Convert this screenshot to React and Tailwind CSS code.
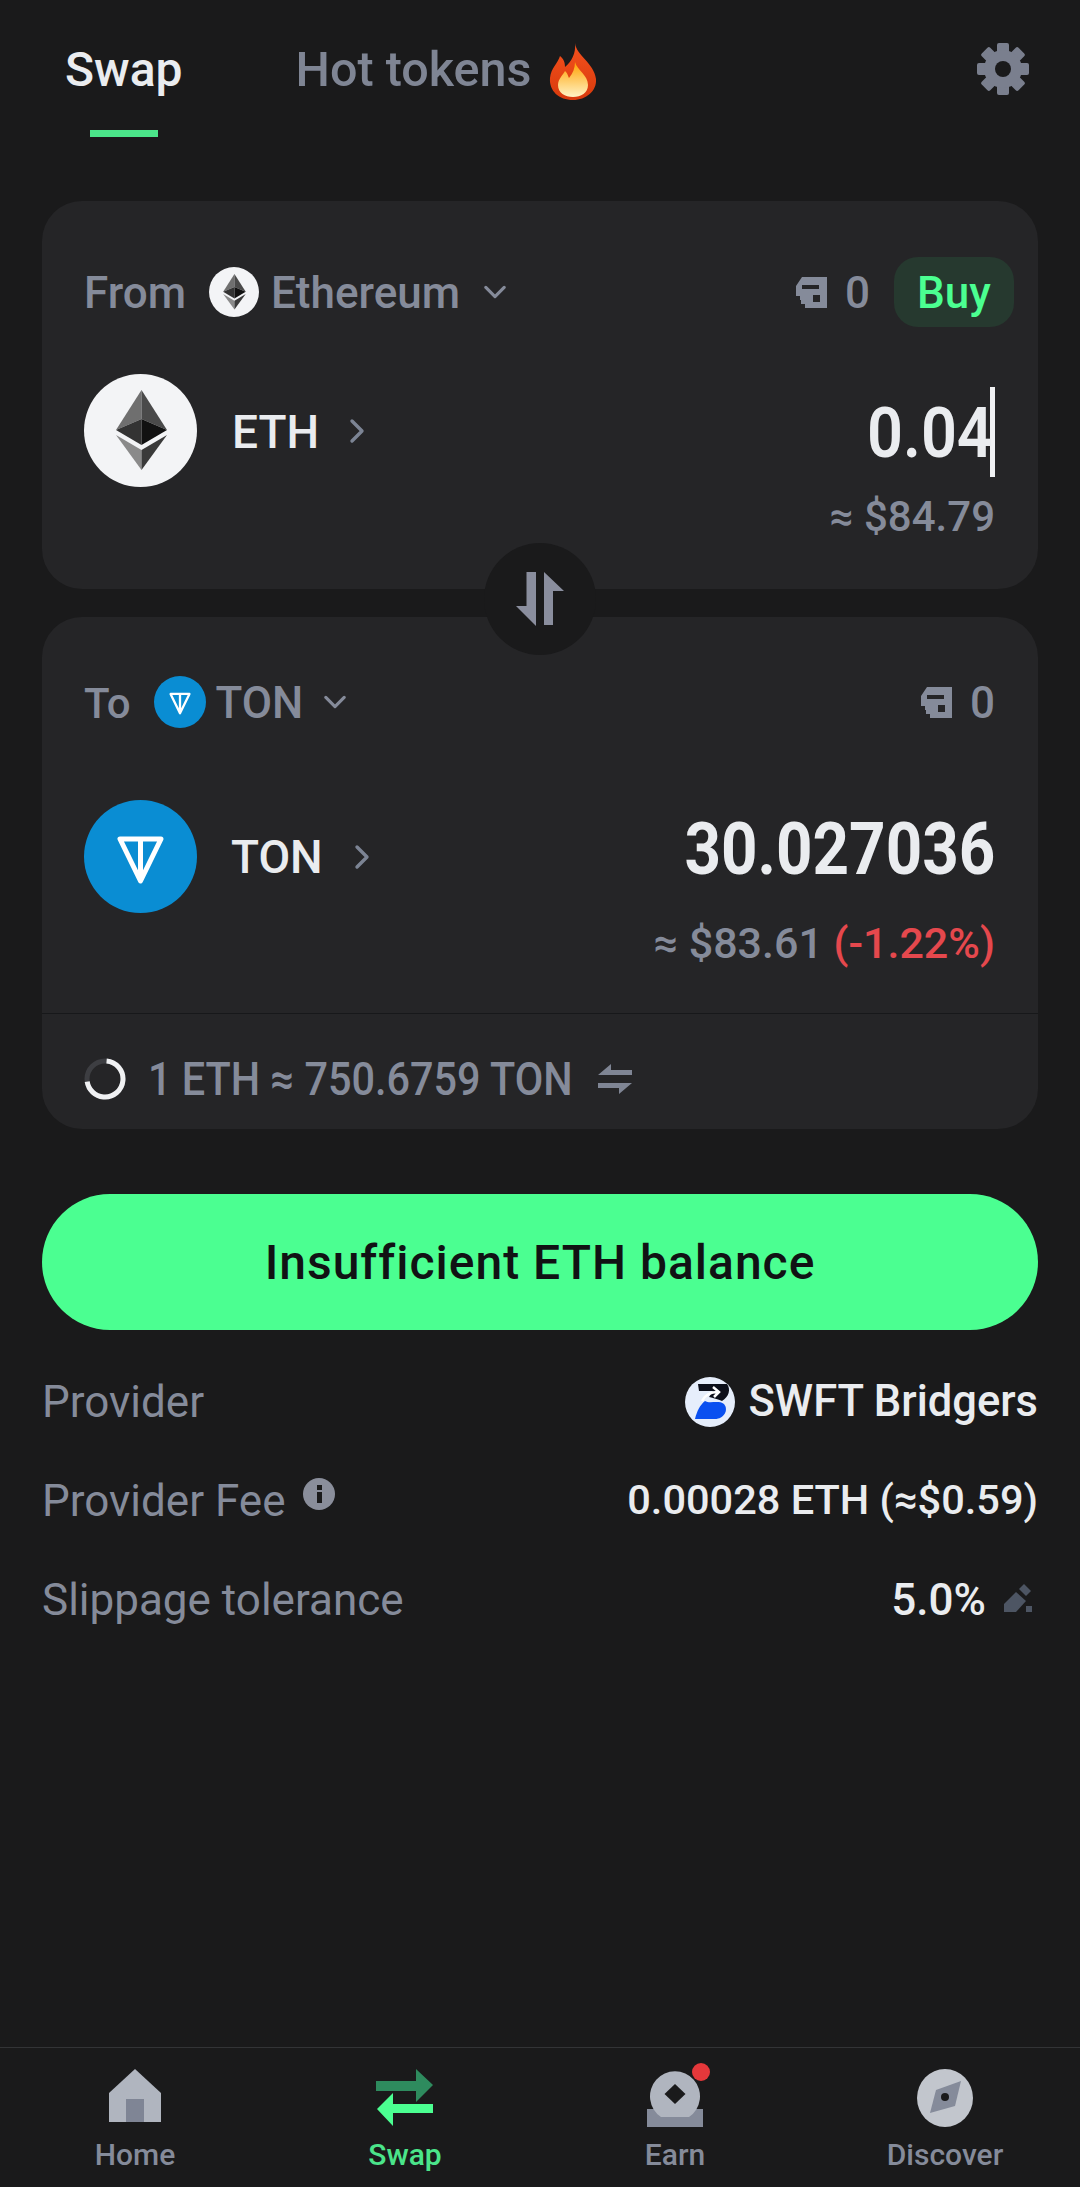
const font = { fontFamily: 'Roboto, sans-serif' };

const Chevron = ({ dir = 'right', className = '' }) => (
  <svg viewBox="0 0 24 24" className={className} fill="none" stroke="currentColor" strokeWidth="3.4" strokeLinecap="round" strokeLinejoin="round">
    {dir === 'right' ? <polyline points="7,2 17,12 7,22" /> : <polyline points="2,7 12,17 22,7" />}
  </svg>
);

const EthIcon = ({ size }) => (
  <svg viewBox="0 0 113 113" width={size} height={size} className="shrink-0">
    <circle cx="56.5" cy="56.5" r="56.5" fill="#f3f4f6" />
    <polygon points="57.5,16 32,56 57.5,45" fill="#6f6f6f" />
    <polygon points="57.5,16 83,56 57.5,45" fill="#4a4a4a" />
    <polygon points="32,56 57.5,45 57.5,71" fill="#333333" />
    <polygon points="83,56 57.5,45 57.5,71" fill="#111111" />
    <polygon points="32,61 57.5,76 57.5,96" fill="#8a8a8a" />
    <polygon points="83,61 57.5,76 57.5,96" fill="#3a3a3a" />
  </svg>
);

const TonIcon = ({ size }) => (
  <svg viewBox="0 0 113 113" width={size} height={size} className="shrink-0">
    <circle cx="56.5" cy="56.5" r="56.5" fill="#0a8dd3" />
    <path d="M36 39 H77 L56.5 81 Z M56.5 39 V81" fill="none" stroke="#ffffff" strokeWidth="5" strokeLinejoin="round" />
  </svg>
);

const Wallet = () => (
  <svg viewBox="0 0 31 31" className="w-[31px] h-[31px]" fill="#858b9a">
    <path d="M6 0 H31 V31 H9 V27 H5 V23 H0 V9 Z" />
    <rect x="6" y="8" width="17" height="4" fill="#252527" />
    <rect x="17" y="18" width="7" height="7" fill="#252527" />
    <rect x="0" y="19" width="4" height="4" fill="#252527" />
  </svg>
);

const Flame = () => (
  <svg viewBox="0 0 50 57" className="w-[50px] h-[57px]">
    <defs>
      <linearGradient id="flameOuter" x1="0" y1="0" x2="0" y2="1">
        <stop offset="0" stopColor="#f4511e" />
        <stop offset="1" stopColor="#d83a0c" />
      </linearGradient>
      <linearGradient id="flameInner" x1="0" y1="0" x2="0" y2="1">
        <stop offset="0" stopColor="#ffa000" />
        <stop offset="1" stopColor="#fff3c4" />
      </linearGradient>
    </defs>
    <path d="M27 0 C28 12 46 20 48 36 C49 48 38 57 25 57 C11 57 1 48 2 35 C3 25 10 20 12 13 C16 16 17 20 17 24 C24 18 28 10 27 0 Z" fill="url(#flameOuter)" />
    <path d="M27 19 C29 27 40 32 40 42 C40 50 33 54 25 54 C17 54 10 50 10 42 C10 36 15 32 17 28 C20 31 20 33 21 35 C25 30 27 25 27 19 Z" fill="url(#flameInner)" />
  </svg>
);

const Gear = () => (
  <svg viewBox="0 0 52 52" className="w-[52px] h-[52px]" fill="#7a7f8e">
    {[0, 45, 90, 135].map((a) => (
      <rect key={a} x="20" y="0" width="12" height="52" rx="2" transform={`rotate(${a} 26 26)`} />
    ))}
    <path fillRule="evenodd" d="M26 7 A19 19 0 1 1 26 45 A19 19 0 1 1 26 7 Z M26 18 A8 8 0 1 0 26 34 A8 8 0 1 0 26 18 Z" />
    <circle cx="26" cy="26" r="8" fill="#1a1a1b" />
  </svg>
);

const Spinner = () => (
  <svg viewBox="0 0 42 42" className="w-[42px] h-[42px] shrink-0" fill="none" strokeWidth="5">
    <circle cx="21" cy="21" r="18" stroke="#3d3e42" />
    <circle cx="21" cy="21" r="18" stroke="#f0f1f3" strokeDasharray="80 113" transform="rotate(-85 21 21)" />
  </svg>
);

const HomeIcon = () => (
  <svg viewBox="0 0 52 53" className="w-[52px] h-[53px]">
    <polygon points="26,0 52,24 52,53 0,53 0,24" fill="#b0b5bf" />
    <rect x="17" y="30" width="18" height="23" fill="#7f8595" />
  </svg>
);

const SwapIcon = () => (
  <svg viewBox="0 0 58 58" className="w-[58px] h-[58px]">
    <polygon points="0,12 40,12 40,0 57,16 40,33 40,22 0,22" fill="#2e8b5e" />
    <polygon points="1,40 17,24 17,35 57,35 57,44 17,44 17,57" fill="#4bff91" />
  </svg>
);

const EarnIcon = () => (
  <svg viewBox="0 0 58 58" className="w-[58px] h-[58px]">
    <rect x="1" y="40" width="56" height="18" fill="#858b9a" />
    <path d="M15 48 A25 25 0 1 1 43 48 Z" fill="#b0b5bf" />
    <polygon points="29,15 39.5,25 29,35 18.500,25" fill="#1a1a1b" />
  </svg>
);

const DiscoverIcon = () => (
  <svg viewBox="0 0 56 58" className="w-[56px] h-[58px]">
    <ellipse cx="28" cy="29" rx="28" ry="29" fill="#c2c6cd" />
    <polygon points="44,12 38,37 13,44 19,21" fill="#858b9a" />
    <circle cx="28" cy="28" r="4" fill="#1a1a1b" />
  </svg>
);

const NavItem = ({ icon, label, active, dot }) => (
  <div className="flex-1 flex flex-col items-center">
    <div className="relative h-[58px] flex items-start justify-center">
      {icon}
      {dot && <span className="absolute -top-[6px] -right-[6px] w-[18px] h-[18px] rounded-full bg-[#e5383b]" />}
    </div>
    <span className={`mt-[8px] text-[30px] leading-[40px] font-medium ${active ? 'text-[#4be58a]' : 'text-[#858b9a]'}`}>{label}</span>
  </div>
);

const DetailRow = ({ left, right }) => (
  <div className="flex justify-between items-center h-[99px] text-[44px]">
    <div className="flex items-center text-[#858b9a]">{left}</div>
    <div className="flex items-center text-[#eaecef] font-medium text-[41.5px]">{right}</div>
  </div>
);

export default function App() {
  return (
    <div className="min-h-screen w-[1080px] bg-[#1a1a1b] flex flex-col overflow-hidden" style={font}>
      {/* Tabs */}
      <div className="h-[137px] flex justify-between pl-[65px] pr-[51px]">
        <div className="flex gap-[113px]">
          <div className="flex flex-col items-center justify-between">
            <span className="text-[48px] leading-[60px] mt-[40px] font-medium text-[#eaecef]">Swap</span>
            <div className="w-[68px] h-[7px] bg-[#4be58a]" />
          </div>
          <div className="flex items-start gap-[16px] mt-[40px]">
            <span className="text-[48.5px] leading-[60px] font-medium text-[#7f8594]">Hot tokens</span>
            <div className="mt-[3px]"><Flame /></div>
          </div>
        </div>
        <div className="pt-[43px]"><Gear /></div>
      </div>

      <div className="px-[42px] mt-[64px]">
        <div className="relative flex flex-col gap-[28px]">
          {/* From */}
          <div className="bg-[#252527] rounded-[40px] pt-[56px] pb-[47px]">
            <div className="flex justify-between items-center h-[70px] pl-[42px] pr-[24px] font-medium text-[#858b9a] text-[44px]">
              <div className="flex items-center">
                <span className="pt-[2px]">From</span>
                <div className="ml-[23px] mr-[12px]"><EthIcon size={50} /></div>
                <span className="pt-[2px]">Ethereum</span>
                <Chevron dir="down" className="w-[22px] h-[22px] ml-[24px]" />
              </div>
              <div className="flex items-center">
                <Wallet />
                <span className="pt-[2px] ml-[18px] mr-[24px]">0</span>
                <div className="w-[120px] h-[70px] pt-[2px] rounded-[24px] bg-[#26392f] text-[#4bff91] flex items-center justify-center">Buy</div>
              </div>
            </div>
            <div className="flex justify-between items-start mt-[47px] pl-[42px] pr-[43px]">
              <div className="flex items-center h-[113px]">
                <EthIcon size={113} />
                <span className="ml-[35px] pt-[3px] text-[46px] font-medium text-[#eaecef]">ETH</span>
                <Chevron className="w-[24px] h-[34px] ml-[26px] text-[#7c8494]" />
              </div>
              <div className="flex flex-col items-end pt-[13px]">
                <div className="flex items-center h-[90px]">
                  <span className="text-[70px] pt-[3px] -mr-[3px] font-semibold text-[#eaecef] scale-x-[0.9] origin-right">0.04</span>
                  <div className="w-[5px] h-[90px] bg-[#f0f1f3]" />
                </div>
                <span className="mt-[15px] h-[50px] leading-[50px] text-[42px] font-medium text-[#858b9a]">≈ $84.79</span>
              </div>
            </div>
          </div>

          {/* To */}
          <div className="bg-[#252527] rounded-[40px] pt-[59px]">
            <div className="flex justify-between items-center h-[52px] pl-[42px] pr-[43px] font-medium text-[#858b9a] text-[44px]">
              <div className="flex items-center">
                <span className="pt-[2px] text-[42px]">To</span>
                <div className="ml-[23px] mr-[10px]"><TonIcon size={52} /></div>
                <span className="pt-[2px]">TON</span>
                <Chevron dir="down" className="w-[22px] h-[22px] ml-[21px]" />
              </div>
              <div className="flex items-center">
                <Wallet />
                <span className="pt-[2px] ml-[18px]">0</span>
              </div>
            </div>
            <div className="flex justify-between items-start mt-[72px] pl-[42px] pr-[43px]">
              <div className="flex items-center h-[113px]">
                <TonIcon size={113} />
                <span className="ml-[34px] pt-[2px] text-[46px] font-medium text-[#eaecef]">TON</span>
                <Chevron className="w-[24px] h-[34px] ml-[27px] text-[#7c8494]" />
              </div>
              <div className="flex flex-col items-end pt-[3px]">
                <span className="h-[90px] leading-[90px] pt-[2px] text-[72px] font-bold text-[#eaecef] scale-x-[0.885] origin-right">30.027036</span>
                <span className="mt-[25px] h-[50px] leading-[50px] text-[43px] font-medium text-[#858b9a]">
                  ≈ $83.61 <span className="text-[#e5484d]">(-1.22%)</span>
                </span>
              </div>
            </div>
            <div className="mt-[45px] border-t border-[#17181a] h-[116px] pt-[15px] pl-[42px] flex items-center">
              <Spinner />
              <span className="ml-[22px] w-[424px] whitespace-nowrap text-[46px] font-medium text-[#858b9a] scale-x-[0.9] origin-left">1 ETH ≈ 750.6759 TON</span>
              <svg viewBox="0 0 34 30" className="w-[34px] h-[30px] ml-[26px]" fill="#7f8594">
                <polygon points="0,11 13,0 13,6 34,6 34,11" />
                <polygon points="34,19 21,30 21,24 0,24 0,19" />
              </svg>
            </div>
          </div>

          {/* Flip button */}
          <div className="absolute left-[442px] top-[342px] w-[112px] h-[112px] rounded-full bg-[#1a1a1b] flex items-center justify-center">
            <svg viewBox="0 0 48 54" className="w-[48px] h-[54px]" fill="#8a8e9e">
              <polygon points="10.500,0 20,0 20,54 0,34 10.500,34" />
              <polygon points="28,0 48,19 37,19 37,53 28,53" />
            </svg>
          </div>
        </div>

        <div className="mt-[65px] h-[136px] pt-[2px] rounded-full bg-[#4bff91] flex items-center justify-center text-[48px] font-medium text-[#111214] tracking-[1px]">
          Insufficient ETH balance
        </div>

        <div className="mt-[22px]">
          <DetailRow
            left="Provider"
            right={
              <>
                <svg viewBox="0 0 50 50" className="w-[50px] h-[50px] mr-[14px]">
                  <circle cx="25" cy="25" r="25" fill="#e6eefb" />
                  <path d="M13 7 H42 C46 12 44 20 37 24 C33 22 28 21 24 20 L28 14 H14 Z" fill="#0c0f1a" />
                  <path d="M20 24 C24 27 34 23 39 27 C44 33 39 42 30 42 H10 C12 34 15 28 20 24 Z" fill="#0a50f0" />
                  <path d="M17 24 C20 18 25 15 33 15 M28 10 L34 15 L29 20" fill="none" stroke="#ffffff" strokeWidth="2.5" />
                </svg>
                <span className="text-[43.5px]">SWFT Bridgers</span>
              </>
            }
          />
          <DetailRow
            left={
              <>
                <span>Provider Fee</span>
                <svg viewBox="0 0 32 32" className="w-[32px] h-[32px] ml-[17px] -mt-[14px]">
                  <circle cx="16" cy="16" r="16" fill="#8a8e9b" />
                  <rect x="14" y="14" width="5" height="11" fill="#1a1a1b" />
                  <rect x="14" y="7" width="5" height="5" fill="#1a1a1b" />
                </svg>
              </>
            }
            right="0.00028 ETH (≈$0.59)"
          />
          <DetailRow
            left="Slippage tolerance"
            right={
              <>
                <span className="text-[44px]">5.0%</span>
                <svg viewBox="0 0 29 28" className="w-[29px] h-[28px] ml-[18px] mr-[5px] -mt-[4px]" fill="#4d5563">
                  <polygon points="0,28 0,20 12,8 22,17 12,28" />
                  <polygon points="15,5 20,0 27,7 22,12" />
                  <rect x="22" y="22" width="6" height="6" />
                </svg>
              </>
            }
          />
        </div>
      </div>

      {/* Bottom nav */}
      <div className="mt-auto h-[140px] border-t border-[#333436] flex pt-[21px]">
        <NavItem icon={<HomeIcon />} label="Home" />
        <NavItem icon={<SwapIcon />} label="Swap" active />
        <NavItem icon={<EarnIcon />} label="Earn" dot />
        <NavItem icon={<DiscoverIcon />} label="Discover" />
      </div>
    </div>
  );
}
